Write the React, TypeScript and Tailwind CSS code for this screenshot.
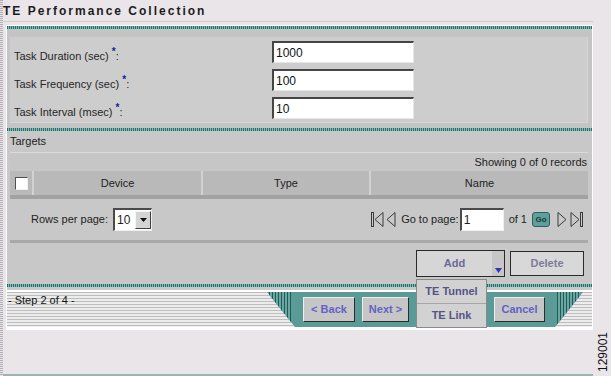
import React from "react";

const tealLine =
  "h-[3px] bg-[repeating-linear-gradient(90deg,#22706a_0px,#22706a_1px,#86bcb7_1px,#86bcb7_2px)]";
const hStripes =
  "bg-[repeating-linear-gradient(180deg,#bdbdbd_0px,#bdbdbd_1px,#ececec_1px,#ececec_3px)]";
const vStripes =
  "bg-[repeating-linear-gradient(90deg,#1f5b57_0px,#1f5b57_1px,#6aa6a2_1px,#6aa6a2_3px)]";

function FormRow({ label, value }: { label: string; value: string }) {
  return (
    <div className="flex h-[22px] items-center">
      <div className="w-[258px] pt-[4px] text-[11px] text-[#262626]">
        {label} <span className="align-super text-[10px] font-bold text-[#1a1aa0]">*</span>:
      </div>
      <div className="flex h-[22px] w-[142px] items-center border-t-2 border-l-2 border-b border-r border-t-[#454545] border-l-[#454545] border-b-[#e6e6e6] border-r-[#e6e6e6] bg-white pl-[2px] text-[12px] text-[#111]">
        {value}
      </div>
    </div>
  );
}

function NavIcon({ dir, bar }: { dir: "left" | "right"; bar?: boolean }) {
  const w = bar ? 13 : 10;
  return (
    <svg width={w} height="15" viewBox={`0 0 ${w} 15`}>
      {dir === "left" ? (
        <>
          {bar && <rect x="0.5" y="0.5" width="2" height="14" fill="none" stroke="#3a3a3a" />}
          <path d={`M${w - 1} 0.5 L${bar ? 4 : 1} 7.5 L${w - 1} 14.5 Z`} fill="none" stroke="#3a3a3a" />
        </>
      ) : (
        <>
          <path d={`M1 0.5 L${bar ? 9 : w - 1} 7.5 L1 14.5 Z`} fill="none" stroke="#3a3a3a" />
          {bar && <rect x="10.5" y="0.5" width="2" height="14" fill="none" stroke="#3a3a3a" />}
        </>
      )}
    </svg>
  );
}

function WizButton({ label, w }: { label: string; w: string }) {
  return (
    <div
      className={`${w} flex h-[25px] items-center justify-center border border-t-[#eeeeee] border-l-[#eeeeee] border-b-[#2c2c2c] border-r-[#2c2c2c] bg-[#c6c6c6] text-[11px] font-bold text-[#6262c6]`}
    >
      {label}
    </div>
  );
}

export default function App() {
  return (
    <div className="flex h-[376px] w-[611px] overflow-hidden bg-[#e9e5e9] font-['Liberation_Sans',Arial,sans-serif] text-[11px] text-[#1e1e1e]">
      {/* dotted page edge */}
      <div className="w-[3px] bg-[repeating-linear-gradient(180deg,#b4acb4_0px,#b4acb4_1px,#e9e5e9_1px,#e9e5e9_2px)]" />

      <div className="flex w-[590px] flex-col">
        {/* Title */}
        <div className="h-[21px] pt-[4px] text-[12px] font-bold leading-[14px] tracking-[2px] text-[#1c1c1c]">
          TE Performance Collection
        </div>
        <div className="h-px w-full bg-[#d8c9c4]" />

        {/* Panel */}
        <div className="mt-[3px] ml-[3px] w-[587px] bg-white px-px pt-px pb-[3px]">
          <div className={tealLine} />

          {/* Form */}
          <div className="h-[99px] bg-[#c4c4c4] pt-[8px]">
            <div className="ml-[3px] flex h-[86px] w-[578px] flex-col gap-[6px] border-r border-b border-r-[#d6d6d6] border-b-[#d6d6d6] bg-[#cdcdcd] pt-[4px] pl-[4px]">
              <FormRow label="Task Duration (sec)" value="1000" />
              <FormRow label="Task Frequency (sec)" value="100" />
              <FormRow label="Task Interval (msec)" value="10" />
            </div>
          </div>

          <div className={tealLine} />

          {/* Targets */}
          <div className="flex h-[153px] flex-col bg-[#c8c8c8] pr-[4px] pl-[3px]">
            <div className="flex h-[21px] items-center text-[11px] text-[#222]">Targets</div>
            <div className="h-px bg-[#dcdcdc]" />
            <div className="flex h-[18px] items-center justify-end bg-[#c6c6c6] pr-px text-[11px] text-[#222]">
              Showing 0 of 0 records
            </div>

            {/* table header */}
            <div className="flex h-[24px] bg-[#b9b9b9] text-[11px] text-[#1e1e1e]">
              <div className="flex w-[24px] items-center justify-center border-r-2 border-[#d2d2d2]">
                <div className="h-[13px] w-[13px] border border-t-[#505050] border-l-[#505050] border-b-[#f0f0f0] border-r-[#f0f0f0] bg-white" />
              </div>
              <div className="flex w-[169px] items-center justify-center border-r-2 border-[#d2d2d2]">Device</div>
              <div className="flex w-[168px] items-center justify-center border-r-2 border-[#d2d2d2]">Type</div>
              <div className="flex flex-1 items-center justify-center">Name</div>
            </div>
            <div className="h-[4px] bg-[#a2a2a2]" />

            {/* pagination */}
            <div className="flex h-[41px] items-center justify-between pr-[5px] pl-[21px]">
              <div className="flex items-center gap-[5px]">
                <span>Rows per page:</span>
                <div className="flex h-[23px] w-[39px] items-center border-t-2 border-l-2 border-b border-r border-t-[#4a4a4a] border-l-[#4a4a4a] border-b-[#f0f0f0] border-r-[#f0f0f0] bg-white">
                  <span className="flex-1 pl-[2px] text-[12px]">10</span>
                  <div className="flex h-[18px] w-[16px] items-center justify-center border border-t-[#f4f4f4] border-l-[#f4f4f4] border-b-[#404040] border-r-[#404040] bg-[#d4d4d4]">
                    <svg width="7" height="4" viewBox="0 0 7 4">
                      <path d="M0 0 H7 L3.5 4 Z" fill="#111" />
                    </svg>
                  </div>
                </div>
              </div>
              <div className="flex items-center">
                <NavIcon dir="left" bar />
                <span className="ml-[2px]"><NavIcon dir="left" /></span>
                <span className="ml-[5px]">Go to page:</span>
                <div className="ml-px flex h-[23px] w-[44px] items-center border-t-2 border-l-2 border-b border-r border-t-[#4a4a4a] border-l-[#4a4a4a] border-b-[#f0f0f0] border-r-[#f0f0f0] bg-white pl-[2px] text-[12px]">
                  1
                </div>
                <span className="ml-[5px]">of 1</span>
                <div className="ml-[5px] flex h-[15px] w-[18px] items-center justify-center rounded-[3px] border border-[#2f5f5c] bg-[#5f9f9b] text-[8px] font-bold text-[#173a38]">
                  Go
                </div>
                <span className="ml-[7px]"><NavIcon dir="right" /></span>
                <span className="ml-[3px]"><NavIcon dir="right" bar /></span>
              </div>
            </div>
            <div className="h-[3px] bg-[#a8a8a8]" />

            {/* Add / Delete */}
            <div className="flex h-[38px] items-start justify-end gap-[5px] pt-[7px] pr-[4px]">
              <div className="relative">
                <div className="flex h-[27px] w-[89px] border border-[#2a2a2a] bg-[#d6d6d6]">
                  <div className="flex flex-1 items-center justify-center text-[11px] font-bold text-[#6a6a9e]">Add</div>
                  <div className="flex w-[12px] items-end justify-center bg-[#c6c6c6] pb-[3px]">
                    <svg width="7" height="5" viewBox="0 0 7 5">
                      <path d="M0 0 H7 L3.5 5 Z" fill="#3434c4" />
                    </svg>
                  </div>
                </div>
                {/* dropdown menu */}
                <div className="absolute top-[29px] left-0 z-10 flex w-[71px] flex-col border border-[#8a8a8a] bg-[#d2d2d2] text-[11px] font-bold text-[#545488]">
                  <div className="flex h-[24px] items-center justify-center border-b border-[#a6a6a6]">TE Tunnel</div>
                  <div className="flex h-[23px] items-center justify-center">TE Link</div>
                </div>
              </div>
              <div className="mt-px flex h-[25px] w-[74px] items-center justify-center border border-[#2a2a2a] bg-[#d8d8d8] text-[11px] font-bold text-[#7c7c98]">
                Delete
              </div>
            </div>
          </div>

          <div className={tealLine} />
          <div className="h-[3px] bg-[#c8c8c8]" />
          <div className="h-[2px] bg-white" />

          {/* Wizard footer */}
          <div className={`flex h-[35px] ${hStripes}`}>
            <div className="w-[260px] pt-[2px] pl-px text-[11px] leading-[13px] text-[#111]">- Step 2 of 4 -</div>
            <div className="flex w-[316px] items-center bg-[#5b9b97] [clip-path:polygon(0_0,100%_0,calc(100%-28px)_100%,28px_100%)]">
              <div className={`ml-[2px] h-full w-[22px] ${vStripes}`} />
              <div className="ml-[12px]">
                <WizButton label="< Back" w="w-[52px]" />
              </div>
              <div className="ml-[7px]">
                <WizButton label="Next >" w="w-[47px]" />
              </div>
              <div className="ml-[85px]">
                <WizButton label="Cancel" w="w-[51px]" />
              </div>
              <div className={`ml-[12px] h-full w-[23px] ${vStripes}`} />
            </div>
            <div className="flex-1" />
          </div>
        </div>

        <div className="flex-1" />
        <div className="h-[2px] bg-[#9db3ae]" />
      </div>

      <div className="flex w-[18px] flex-col justify-end pb-[4px] pl-[4px]">
        <div className="rotate-180 text-[12px] leading-[12px] text-[#111] [writing-mode:vertical-rl]">129001</div>
      </div>
    </div>
  );
}
